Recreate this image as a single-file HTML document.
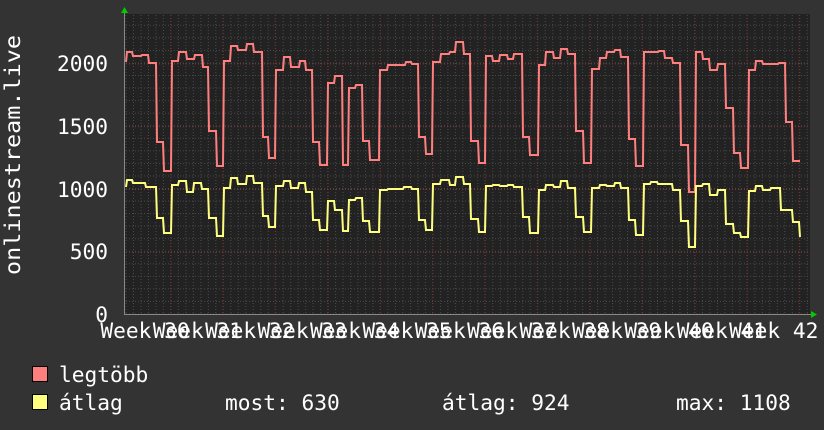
<!DOCTYPE html>
<html><head><meta charset="utf-8"><style>
html,body{margin:0;padding:0;background:#333333;}
svg{display:block;}
text{font-family:"DejaVu Sans Mono","Liberation Mono",monospace;fill:#ffffff;font-size:21.2px;}
</style></head><body>
<svg width="824" height="430" viewBox="0 0 824 430" xmlns="http://www.w3.org/2000/svg">
<defs>
<pattern id="vmin" x="125.5" y="0" width="7.486" height="430" patternUnits="userSpaceOnUse">
<line x1="0.5" y1="0" x2="0.5" y2="430" stroke="#4a4a4a" stroke-width="1" stroke-dasharray="1,2"/>
</pattern>
<pattern id="hmin" x="0" y="313.5" width="824" height="12.55" patternUnits="userSpaceOnUse">
<line x1="0" y1="0.5" x2="824" y2="0.5" stroke="#4a4a4a" stroke-width="1" stroke-dasharray="1,2"/>
</pattern>
<pattern id="vmaj" x="170" y="0" width="52.4" height="430" patternUnits="userSpaceOnUse">
<line x1="0.5" y1="0" x2="0.5" y2="430" stroke="#7a3030" stroke-width="1" stroke-dasharray="1,2"/>
</pattern>
<pattern id="hmaj" x="0" y="0.75" width="824" height="62.75" patternUnits="userSpaceOnUse">
<line x1="0" y1="0.5" x2="824" y2="0.5" stroke="#7a3030" stroke-width="1" stroke-dasharray="1,2"/>
</pattern>
</defs>
<rect width="824" height="430" fill="#333333"/>
<rect x="124" y="14" width="686" height="300" fill="#222222"/>
<rect x="124" y="14" width="686" height="300" fill="url(#vmin)"/>
<rect x="124" y="14" width="686" height="300" fill="url(#hmin)"/>
<rect x="124" y="14" width="686" height="300" fill="url(#vmaj)"/>
<rect x="124" y="14" width="686" height="300" fill="url(#hmaj)"/>
<line x1="124" y1="314.5" x2="812" y2="314.5" stroke="#888" stroke-width="1"/>
<line x1="124.5" y1="12" x2="124.5" y2="315" stroke="#888" stroke-width="1"/>
<polygon points="121,13 124.5,7 128,13" fill="#00cc00"/>
<polygon points="811,311 817,314.5 811,318" fill="#00cc00"/>

<polyline fill="none" stroke="#ff7f7f" stroke-width="2" points="126,62 127,52 132,52 133,56 141,56 142,55 148,55 149,63 156,63 157,142 163,142 164,171 171,171 172,61 178,61 179,52 186,52 187,59 194,59 195,55 202,55 203,67 208,67 209,131 216,131 217,166 223,166 224,61 230,61 231,46 237,46 238,50 246,50 247,44 253,44 254,52 262,52 263,137 268,137 269,158 275,158 276,70 283,70 284,57 290,57 291,67 299,67 300,61 305,61 306,70 312,70 313,142 319,142 320,165 327,165 328,83 334,83 335,76 342,76 343,165 348,165 349,88 355,88 356,85 362,85 363,141 369,141 370,160 379,160 380,70 387,70 388,65 405,65 406,62 411,62 412,64 418,64 419,137 425,137 426,154 432,154 433,62 440,62 441,54 449,54 450,52 455,52 456,42 463,42 464,54 470,54 471,141 478,141 479,163 485,163 486,56 492,56 493,61 499,61 500,55 507,55 508,59 513,59 514,54 522,54 523,137 529,137 530,155 538,155 539,65 545,65 546,52 553,52 554,58 560,58 561,49 567,49 568,54 575,54 576,131 583,131 584,163 591,163 592,69 599,69 600,58 606,58 607,52 614,52 615,50 620,50 621,57 628,57 629,139 635,139 636,166 643,166 644,52 658,52 659,51 664,51 665,58 672,58 673,63 680,63 681,145 688,145 689,192 695,192 696,52 702,52 703,59 709,59 710,70 717,70 718,64 725,64 726,108 733,108 734,153 740,153 741,168 748,168 749,70 755,70 756,61 762,61 763,64 778,64 779,63 785,63 786,122 792,122 793,161 800,161"/>

<polyline fill="none" stroke="#ffff7f" stroke-width="2" points="126,187 127,180 132,180 133,183 145,183 146,187 156,187 157,218 163,218 164,233 171,233 172,185 178,185 179,181 186,181 187,192 193,192 194,183 201,183 202,189 208,189 209,218 216,218 217,236 223,236 224,188 230,188 231,178 237,178 238,184 246,184 247,176 253,176 254,183 262,183 263,216 268,216 269,227 275,227 276,186 283,186 284,181 290,181 291,188 298,188 299,183 305,183 306,192 312,192 313,220 319,220 320,230 327,230 328,201 334,201 335,210 342,210 343,231 348,231 349,200 355,200 356,198 362,198 363,221 369,221 370,232 379,232 380,190 387,190 388,189 403,189 404,187 411,187 412,189 418,189 419,220 425,220 426,230 432,230 433,184 440,184 441,180 449,180 450,185 455,185 456,177 463,177 464,184 470,184 471,219 478,219 479,232 485,232 486,186 492,186 493,185 499,185 500,186 507,186 508,185 513,185 514,187 522,187 523,217 529,217 530,233 538,233 539,190 545,190 546,185 553,185 554,187 560,187 561,181 567,181 568,188 575,188 576,217 583,217 584,232 591,232 592,188 599,188 600,185 606,185 607,186 614,186 615,183 620,183 621,188 628,188 629,220 635,220 636,235 643,235 644,184 650,184 651,182 657,182 658,184 672,184 673,190 680,190 681,221 688,221 689,247 695,247 696,186 702,186 703,184 709,184 710,195 717,195 718,190 725,190 726,224 733,224 734,233 740,233 741,237 748,237 749,191 755,191 756,186 762,186 763,190 770,190 771,188 780,188 781,210 786,210 792,210 793,222 799,222 800,237"/>

<g text-anchor="end">
<text x="108" y="71">2000</text>
<text x="108" y="134">1500</text>
<text x="108" y="197">1000</text>
<text x="108" y="259">500</text>
<text x="108" y="322">0</text>
</g>
<text transform="translate(20,275) rotate(-90)" textLength="240" lengthAdjust="spacingAndGlyphs">onlinestream.live</text>

<g text-anchor="middle">
<text x="145" y="338">Week 30</text>
<text x="197.4" y="338">Week 31</text>
<text x="249.8" y="338">Week 32</text>
<text x="302.2" y="338">Week 33</text>
<text x="354.6" y="338">Week 34</text>
<text x="407" y="338">Week 35</text>
<text x="459.4" y="338">Week 36</text>
<text x="511.8" y="338">Week 37</text>
<text x="564.2" y="338">Week 38</text>
<text x="616.6" y="338">Week 39</text>
<text x="669" y="338">Week 40</text>
<text x="721.4" y="338">Week 41</text>
<text x="773.8" y="338">Week 42</text>
</g>

<rect x="32.5" y="366.5" width="15" height="15" fill="#ff7f7f" stroke="#000" stroke-width="1"/>
<rect x="32.5" y="394.5" width="15" height="15" fill="#ffff7f" stroke="#000" stroke-width="1"/>
<text x="59" y="382">legtöbb</text>
<text x="59" y="410">átlag</text>
<text x="225" y="410">most: 630</text>
<text x="442" y="410">átlag: 924</text>
<text x="676" y="410">max: 1108</text>
</svg>
</body></html>
